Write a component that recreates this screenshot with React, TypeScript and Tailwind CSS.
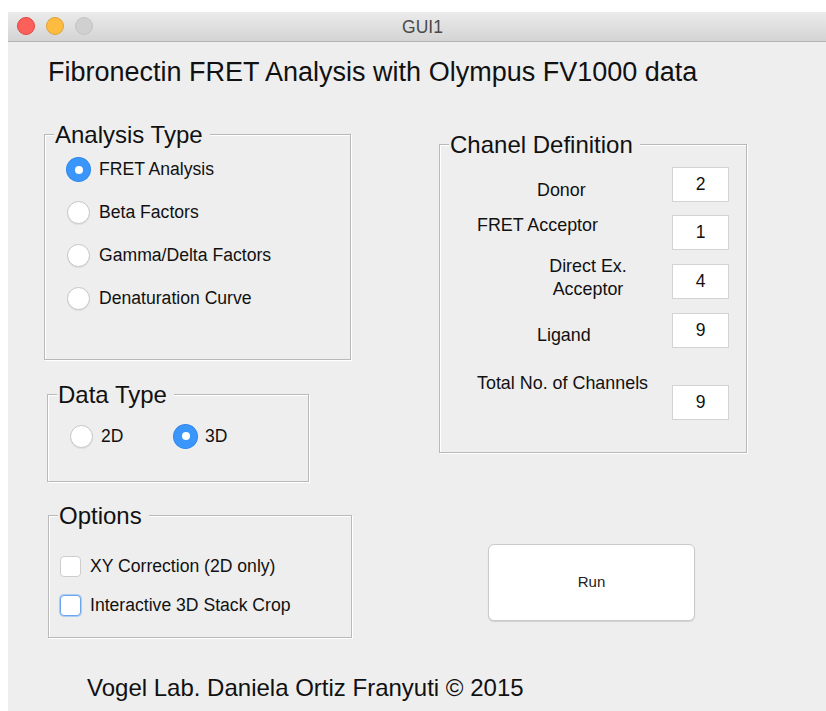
import React from "react";

type RadioProps = { checked?: boolean };

function Radio({ checked }: RadioProps) {
  if (checked) {
    return (
      <span className="flex h-[23px] w-[23px] shrink-0 items-center justify-center rounded-full bg-[#3a96fb] shadow-[0_0_0_1px_#2f86ea]">
        <span className="h-[8px] w-[8px] rounded-full bg-white" />
      </span>
    );
  }
  return (
    <span className="h-[23px] w-[23px] shrink-0 rounded-full border border-[#c6c6c6] bg-white shadow-[0_1px_1px_rgba(0,0,0,0.06)]" />
  );
}

function Checkbox({ focused }: { focused?: boolean }) {
  if (focused) {
    return (
      <span className="h-[21px] w-[21px] shrink-0 rounded-[4px] border border-[#6fa5ec] bg-white shadow-[0_0_0_1px_#acccf4]" />
    );
  }
  return (
    <span className="h-[21px] w-[21px] shrink-0 rounded-[4px] border border-[#cdcdcd] bg-white" />
  );
}

function Group({
  title,
  className,
  children,
}: {
  title: string;
  className: string;
  children?: React.ReactNode;
}) {
  return (
    <div
      className={`relative border border-[#b9b9b9] shadow-[inset_1px_1px_0_#ffffff,1px_1px_0_#ffffff] ${className}`}
    >
      <span className="absolute -top-[12px] left-[9px] bg-[#eeeeee] pl-[1px] pr-[7px] text-[24px] leading-[24px] text-[#111]">
        {title}
      </span>
      {children}
    </div>
  );
}

function Field({ value, className = "" }: { value: string; className?: string }) {
  return (
    <div
      className={`ml-auto flex h-[35px] w-[57px] shrink-0 items-center justify-center border border-[#d3d3d3] bg-white text-[17.5px] text-[#111] ${className}`}
    >
      {value}
    </div>
  );
}

export default function App() {
  const analysis = ["FRET Analysis", "Beta Factors", "Gamma/Delta Factors", "Denaturation Curve"];

  return (
    <div className="flex h-[711px] w-[826px] flex-col overflow-hidden bg-white pl-[8px] pt-[12px] font-['Liberation_Sans',Arial,sans-serif] text-[#111]">
      <div className="flex flex-1 flex-col">
        {/* title bar */}
        <div className="relative flex h-[30px] shrink-0 items-center border-b border-[#b3b3b3] bg-gradient-to-b from-[#ebebeb] to-[#d4d4d4]">
          <div className="absolute left-[9px] top-[5px] flex gap-[11px]">
            <span className="h-[18px] w-[18px] rounded-full border border-[#e0443e] bg-[#fc605b]" />
            <span className="h-[18px] w-[18px] rounded-full border border-[#dea236] bg-[#fdbc40]" />
            <span className="h-[18px] w-[18px] rounded-full border border-[#c4c4c4] bg-[#d0d0d0]" />
          </div>
          <div className="flex-1 pl-[11px] text-center text-[17.5px] leading-[20px] text-[#4a4a4a]">GUI1</div>
        </div>

        {/* window body */}
        <div className="flex flex-1 flex-col bg-[#eeeeee] pt-[14px]">
          <h1 className="ml-[40px] text-[27px] font-normal leading-[32px]">
            Fibronectin FRET Analysis with Olympus FV1000 data
          </h1>

          <div className="mt-[46px] flex">
            {/* left column */}
            <div className="flex w-[344px] shrink-0 flex-col">
              <Group title="Analysis Type" className="ml-[36px] h-[226px] w-[307px] pt-[13px]">
                {analysis.map((label, i) => (
                  <div key={label} className="flex h-[43px] items-center gap-[9px] pl-[22px] text-[17.6px]">
                    <Radio checked={i === 0} />
                    <span>{label}</span>
                  </div>
                ))}
              </Group>

              <Group title="Data Type" className="ml-[39px] mt-[34px] h-[88px] w-[262px] pt-[19px]">
                <div className="flex h-[44px] items-center pl-[22px] text-[17.5px]">
                  <div className="flex w-[104px] items-center gap-[8px]">
                    <Radio />
                    <span>2D</span>
                  </div>
                  <div className="flex items-center gap-[8px]">
                    <Radio checked />
                    <span>3D</span>
                  </div>
                </div>
              </Group>

              <Group title="Options" className="ml-[40px] mt-[33px] h-[123px] w-[304px] pt-[31px]">
                <div className="flex h-[39px] items-center gap-[9px] pl-[11px] text-[17.6px]">
                  <Checkbox />
                  <span>XY Correction (2D only)</span>
                </div>
                <div className="flex h-[39px] items-center gap-[9px] pl-[11px] text-[17.6px]">
                  <Checkbox focused />
                  <span>Interactive 3D Stack Crop</span>
                </div>
              </Group>
            </div>

            {/* right column */}
            <div className="ml-[87px] flex flex-col">
              <Group title="Chanel Definition" className="mt-[10px] h-[309px] w-[308px] pr-[17px] pt-[22px] text-[17.9px]">
                <div className="flex items-start">
                  <span className="ml-[97px] mt-[13px] leading-[20px]">Donor</span>
                  <Field value="2" />
                </div>
                <div className="mt-[13px] flex items-start">
                  <span className="ml-[37px] leading-[20px]">FRET Acceptor</span>
                  <Field value="1" />
                </div>
                <div className="mt-[5px] flex items-start">
                  <span className="ml-[107px] w-[82px] text-center leading-[22.5px]">
                    Direct Ex.
                    <br />
                    Acceptor
                  </span>
                  <Field value="4" className="mt-[9px]" />
                </div>
                <div className="mt-[13px] flex items-start">
                  <span className="ml-[97px] mt-[12px] leading-[20px]">Ligand</span>
                  <Field value="9" />
                </div>
                <div className="mt-[25px] flex items-start">
                  <span className="ml-[37px] leading-[20px]">Total No. of Channels</span>
                  <Field value="9" className="mt-[12px]" />
                </div>
              </Group>

              <button
                type="button"
                className="ml-[49px] mt-[91px] flex h-[77px] w-[207px] items-center justify-center rounded-[6px] border border-[#cacaca] bg-white text-[15px] text-[#222] shadow-[0_1px_1px_rgba(0,0,0,0.12)]"
              >
                Run
              </button>
            </div>
          </div>

          <div className="ml-[79px] mt-[36px] text-[24px] leading-[28px]">
            Vogel Lab. Daniela Ortiz Franyuti © 2015
          </div>
        </div>
      </div>
    </div>
  );
}
